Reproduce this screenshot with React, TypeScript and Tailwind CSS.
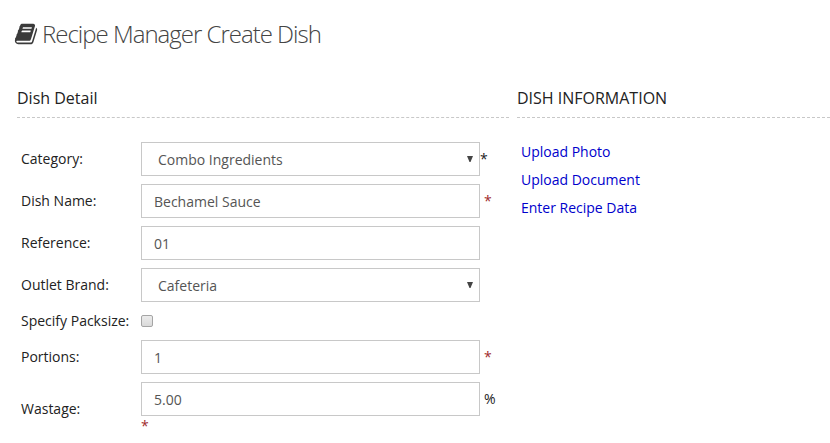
import { useState } from "react";
import type { ReactNode } from "react";

const fieldClass =
    "block h-[34px] w-full rounded-none border border-[#c8c8c8] bg-white text-sm text-[#555] outline-none focus:border-[#888]";

const links = ["Upload Photo", "Upload Document", "Enter Recipe Data"];

function BookIcon() {
    return (
        <svg viewBox="0 0 1792 1792" className="h-6 w-6 fill-[#3a3a3a]" aria-hidden="true">
            <path d="M1703 478q40 57 18 129l-275 906q-19 64-76.5 107.5t-122.5 43.5h-923q-77 0-148.5-53.5t-99.5-131.5q-24-67-2-127 0-4 3-27t4-37q1-8-3-21.5t-3-19.5q2-11 8-21t16.5-23.5 16.5-23.5q23-38 45-91.5t30-91.5q3-10 .5-30t-.5-28q3-11 17-28t17-23q21-36 42-92t25-90q1-9-2.5-32t.5-28q4-13 22-30.5t22-22.5q19-26 42.5-84.5t27.5-96.5q1-8-3-25.5t-2-26.5q2-8 9-18t18-23 17-21q8-12 16.5-30.5t15-35 16-36 19.5-32 26.5-23.5 36-11.5 47.5 5.5l-1 3q38-9 51-9h761q74 0 114 56t18 130l-274 906q-36 119-71.5 153.5t-128.5 34.5h-869q-27 0-38 15-11 16-1 43 24 70 144 70h923q29 0 56-15.5t35-41.5l300-987q7-22 5-57 38 15 59 43zm-1064 2q-4 13 2 22.5t20 9.5h608q13 0 25.5-9.5t16.5-22.5l21-64q4-13-2-22.5t-20-9.5h-608q-13 0-25.5 9.5t-16.5 22.5zm-83 256q-4 13 2 22.5t20 9.5h608q13 0 25.5-9.5t16.5-22.5l21-64q4-13-2-22.5t-20-9.5h-608q-13 0-25.5 9.5t-16.5 22.5z" />
        </svg>
    );
}

function Row({ id, label, children, after }: { id: string; label: string; children: ReactNode; after?: ReactNode }) {
    return (
        <div className="flex items-center py-1">
            <label htmlFor={id} className="w-[120px] shrink-0">
                {label}
            </label>
            <div className="min-w-0 flex-1">{children}</div>
            <div className="w-[29px] shrink-0">{after}</div>
        </div>
    );
}

function Select({ id, options }: { id: string; options: string[] }) {
    return (
        <div className="relative">
            <select id={id} className={`${fieldClass} appearance-none pt-[2px] pl-4`}>
                {options.map((option) => (
                    <option key={option}>{option}</option>
                ))}
            </select>
            <svg viewBox="0 0 6 6" className="pointer-events-none absolute top-[14px] right-[7px] h-[6px] w-[6px] fill-[#444]" aria-hidden="true">
                <path d="M0 0h6L3.5 6h-1z" />
            </svg>
        </div>
    );
}

function TextField({ id, initial }: { id: string; initial: string }) {
    const [value, setValue] = useState(initial);
    return (
        <input id={id} type="text" value={value} onChange={(e) => setValue(e.target.value)} className={`${fieldClass} px-3`} />
    );
}

function SectionTitle({ children }: { children: ReactNode }) {
    return <h2 className="border-b border-dashed border-[#c8c8c8] pb-[7px] text-base leading-6 text-[#222]">{children}</h2>;
}

function Required() {
    return <span className="text-[#a02c2c]">*</span>;
}

export default function App() {
    return (
        <main className="bg-white pt-4 font-['Open_Sans',sans-serif] text-sm text-[#222]">
            <h1 className="flex items-center gap-1 pl-[14px] text-2xl leading-9 font-light tracking-[-1px] text-[#444]">
                <BookIcon />
                Recipe Manager Create Dish
            </h1>
            <div className="mt-[34px] grid grid-cols-[11fr_7fr] gap-2 pl-[17px]">
                <section>
                    <SectionTitle>Dish Detail</SectionTitle>
                    <form className="pt-5 pl-1">
                        <Row id="category" label="Category:" after="*">
                            <Select id="category" options={["Combo Ingredients"]} />
                        </Row>
                        <Row id="name" label="Dish Name:" after={<div className="pl-1"><Required /></div>}>
                            <TextField id="name" initial="Bechamel Sauce" />
                        </Row>
                        <Row id="reference" label="Reference:">
                            <TextField id="reference" initial="01" />
                        </Row>
                        <Row id="outlet" label="Outlet Brand:">
                            <Select id="outlet" options={["Cafeteria"]} />
                        </Row>
                        <div className="flex h-[30px] items-center">
                            <label htmlFor="packsize" className="w-[120px] shrink-0">
                                Specify Packsize:
                            </label>
                            <input
                                id="packsize"
                                type="checkbox"
                                className="h-3 w-3 appearance-none rounded-xs border border-[#a5a5a5] bg-linear-to-b from-[#ececec] to-[#dadada] checked:bg-[#777]"
                            />
                        </div>
                        <Row id="portions" label="Portions:" after={<div className="pl-1"><Required /></div>}>
                            <TextField id="portions" initial="1" />
                        </Row>
                        <div className="flex items-center py-1">
                            <label htmlFor="wastage" className="w-[120px] shrink-0">
                                Wastage:
                            </label>
                            <div className="min-w-0 flex-1">
                                <div className="flex items-center">
                                    <div className="min-w-0 flex-1">
                                        <TextField id="wastage" initial="5.00" />
                                    </div>
                                    <span className="w-[29px] shrink-0 pl-1">%</span>
                                </div>
                                <div className="leading-5">
                                    <Required />
                                </div>
                            </div>
                        </div>
                    </form>
                </section>
                <section>
                    <SectionTitle>DISH INFORMATION</SectionTitle>
                    <ul className="pt-5 pl-1">
                        {links.map((link) => (
                            <li key={link} className="py-1">
                                <a href="#" className="text-[#0000cc] hover:underline">
                                    {link}
                                </a>
                            </li>
                        ))}
                    </ul>
                </section>
            </div>
        </main>
    );
}
